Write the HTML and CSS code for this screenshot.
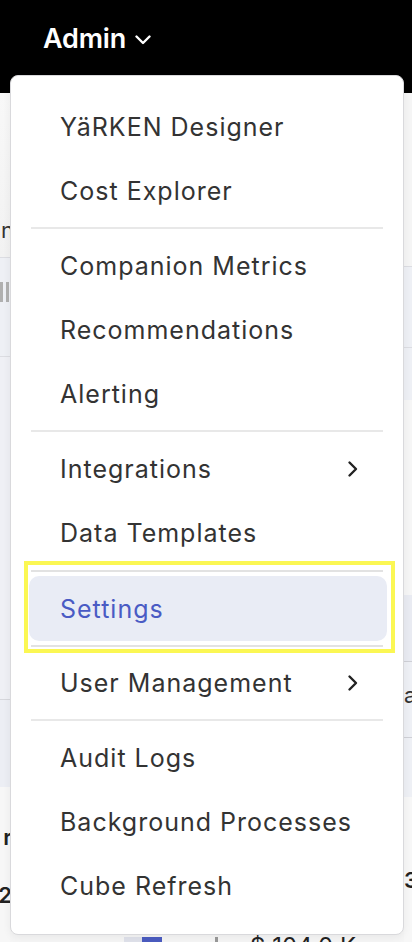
FILE: index.html
```html
<!DOCTYPE html>
<html lang="en">
<head>
<meta charset="utf-8">
<title>Admin menu</title>
<link rel="stylesheet" href="styles.css">
</head>
<body>
<div class="app">
  <header class="topbar">
    <button class="nav-admin">Admin
      <svg class="nav-chev" width="16" height="10" viewBox="0 0 16 10"><path d="M1.5 1.5 L8 8 L14.5 1.5" fill="none" stroke="#fff" stroke-width="2.4" stroke-linecap="round" stroke-linejoin="round"/></svg>
    </button>
  </header>
  <main class="content">
    <div class="col col-left">
      <div class="cell l1"><span class="frag">n</span></div>
      <div class="cell l2"><span class="bars"><i></i><i></i></span></div>
      <div class="cell l3"></div>
      <div class="cell l4"></div>
      <div class="cell l5"><span class="frag bold">r</span><span class="frag bold">X2</span></div>
    </div>
    <div class="col col-mid">
      <div class="chart-row">
        <span class="swatch light"></span><span class="swatch blue"></span>
        <span class="tick"></span>
        <span class="amount">$ 104.0 K</span>
      </div>
    </div>
    <div class="col col-right">
      <div class="cell r1"></div>
      <div class="cell r2"></div>
      <div class="cell r3"></div>
      <div class="cell r4"></div>
      <div class="cell r5"></div>
      <div class="cell r6"><span class="frag">a</span></div>
      <div class="cell r7"></div>
      <div class="cell r8"><span class="frag bold">3</span></div>
    </div>
  </main>

  <nav class="menu">
    <a class="item">YäRKEN Designer</a>
    <a class="item">Cost Explorer</a>
    <hr class="divider">
    <a class="item">Companion Metrics</a>
    <a class="item">Recommendations</a>
    <a class="item">Alerting</a>
    <hr class="divider">
    <a class="item has-sub">Integrations
      <svg class="sub-chev" width="12" height="18" viewBox="0 0 12 18"><path d="M2.5 2.5 L9 9 L2.5 15.5" fill="none" stroke="#222" stroke-width="2.4" stroke-linecap="round" stroke-linejoin="round"/></svg>
    </a>
    <a class="item">Data Templates</a>
    <div class="focus-group">
      <hr class="inner-line">
      <a class="item active">Settings</a>
      <hr class="inner-line">
    </div>
    <a class="item has-sub">User Management
      <svg class="sub-chev" width="12" height="18" viewBox="0 0 12 18"><path d="M2.5 2.5 L9 9 L2.5 15.5" fill="none" stroke="#222" stroke-width="2.4" stroke-linecap="round" stroke-linejoin="round"/></svg>
    </a>
    <hr class="divider">
    <a class="item">Audit Logs</a>
    <a class="item">Background Processes</a>
    <a class="item">Cube Refresh</a>
  </nav>
</div>
</body>
</html>
```

FILE: styles.css
```css
* { box-sizing: border-box; }
html, body { margin: 0; padding: 0; }
body {
  font-family: Inter, "Noto Sans", "Liberation Sans", sans-serif;
  background: #f6f6f6;
  color: #333;
}
.app {
  position: relative;
  width: 412px;
  height: 942px;
  overflow: hidden;
  display: flex;
  flex-direction: column;
}
.topbar {
  height: 93px;
  background: #000;
  flex: none;
  padding: 22px 0 0 43px;
}
.nav-admin {
  background: none;
  border: 0;
  padding: 0;
  color: #fff;
  font-family: inherit;
  font-size: 27px;
  font-weight: 600;
  display: flex;
  align-items: center;
  gap: 9px;
  letter-spacing: -0.2px;
}
.nav-chev { margin-top: 2px; }

.content {
  flex: 1;
  display: flex;
  min-height: 0;
}
.col {
  display: flex;
  flex-direction: column;
  overflow: hidden;
}
.col-left { width: 10px; flex: none; }
.col-mid { flex: 1; background: #f5f5f5; }
.col-right { width: 8px; flex: none; }

.cell {
  position: relative;
  flex: none;
  overflow: hidden;
  white-space: nowrap;
}
.frag {
  font-size: 22px;
  color: #333;
  display: block;
  line-height: 1;
}
.bold { font-weight: 600; color: #222; }

.l1 { height: 165px; background: linear-gradient(#f8f8f8, #f2f2f2); border-bottom: 1px solid #dcdde2; display: flex; justify-content: flex-end; padding-top: 126px; }
.l1 .frag { margin-right: -4px; }
.l2 { height: 99px; background: #eef0f5; border-bottom: 1px solid #dcdde2; padding-top: 24px; }
.bars { display: flex; gap: 3px; }
.bars i { display: block; width: 3px; height: 20px; background: #b0b0b0; }
.l3 { height: 343px; background: #eff0f5; border-bottom: 1px solid #d6d7dc; }
.l4 { height: 87px; background: #eceef4; }
.l5 { flex: 1; background: #f7f7f7; display: flex; flex-direction: column; align-items: flex-end; padding-top: 39px; gap: 36px; }
.l5 .frag { margin-right: -2px; }

.r1 { height: 174px; background: #f5f5f5; border-bottom: 1px solid #dcdde2; }
.r2 { height: 81px; background: #eef0f5; border-bottom: 1px solid #dcdde2; }
.r3 { height: 52px; background: #eef0f5; }
.r4 { height: 195px; background: #f6f6f6; }
.r5 { height: 67px; background: #e9ebf2; border-bottom: 1px solid #cfd0d6; }
.r6 { height: 76px; background: #eef0f5; border-bottom: 1px solid #cfd0d6; padding-top: 22px; }
.r7 { height: 59px; background: #eef0f5; }
.r8 { flex: 1; background: #f7f7f7; padding-top: 72px; }

.chart-row {
  margin-top: auto;
  height: 7px;
  overflow: hidden;
  display: flex;
  align-items: flex-start;
  padding-left: 114px;
  padding-top: 2px;
}
.swatch { display: block; width: 18px; height: 12px; flex: none; }
.swatch.light { background: #dfe1ea; }
.swatch.blue { background: #4b5cc0; width: 20px; }
.tick { display: block; width: 3px; height: 12px; background: #999; margin-left: 53px; flex: none; }
.amount { font-size: 24px; color: #222; margin-left: 32px; line-height: 1; margin-top: -2px; white-space: nowrap; }

.menu {
  position: absolute;
  top: 75px;
  left: 10px;
  width: 394px;
  background: #fff;
  border: 1px solid #d9d9dc;
  border-radius: 8px;
  box-shadow: 0 2px 8px rgba(0,0,0,0.06);
  padding: 19px 0 16px;
  display: flex;
  flex-direction: column;
}
.item {
  height: 64px;
  display: flex;
  align-items: center;
  padding-left: 49px;
  padding-right: 44px;
  font-size: 25px;
  color: #333;
  letter-spacing: 1px;
  text-decoration: none;
  white-space: nowrap;
}
.has-sub { justify-content: space-between; }
.divider {
  margin: 4px 20px 5px;
  border: 0;
  height: 2px;
  background: #e8e8e8;
}
.focus-group {
  position: relative;
  padding: 5px 0 4px;
}
.focus-group::after {
  content: "";
  position: absolute;
  top: -4px;
  left: 13px;
  right: 8px;
  bottom: -2px;
  border: 4px solid #fbf753;
  pointer-events: none;
}
.inner-line {
  margin: 0 20px;
  border: 0;
  height: 2px;
  background: #e2e2e2;
}
.item.active {
  height: 65px;
  margin: 4px 16px 4px 18px;
  padding-left: 31px;
  background: #e9ecf5;
  border-radius: 10px;
  color: #4a5bc4;
}
```
